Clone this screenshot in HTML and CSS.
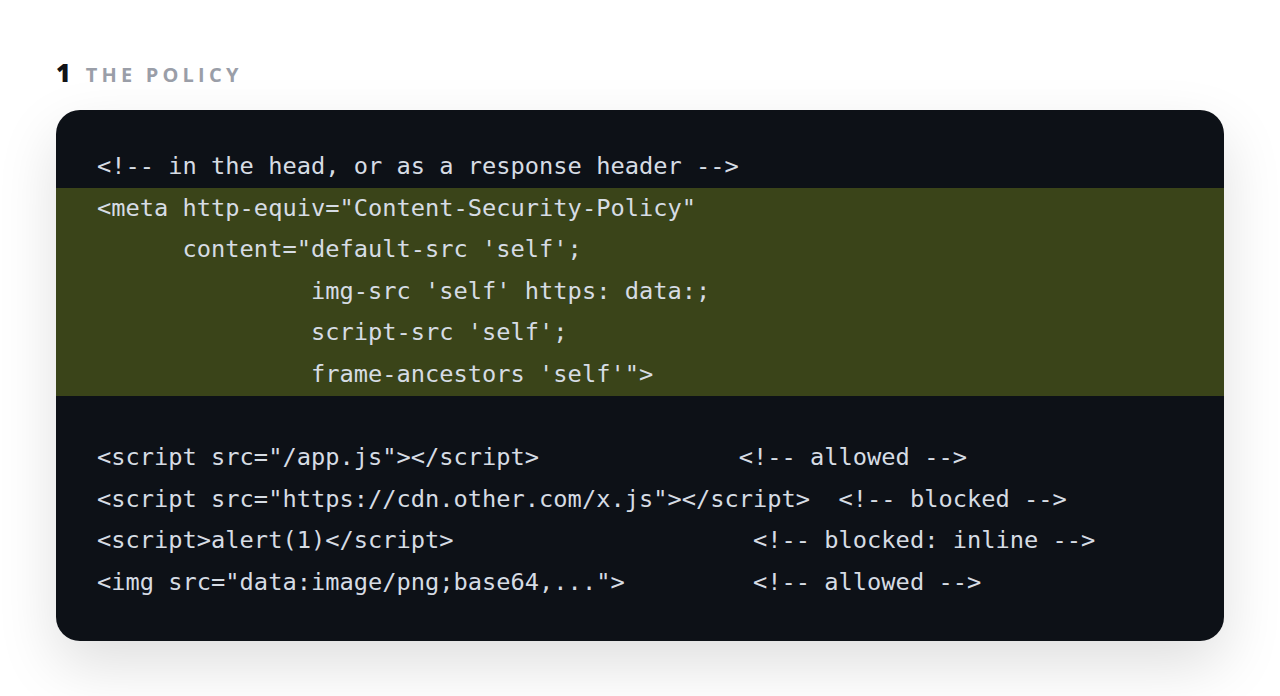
FILE: index.html
```html
<!DOCTYPE html>
<html lang="en">
<head>
<meta charset="utf-8">
<title>The policy</title>
<link rel="stylesheet" href="styles.css">
</head>
<body>
<section class="section">
  <h2 class="heading"><span class="num">1</span><span class="label">THE POLICY</span></h2>
  <div class="code">
    <div class="line">&lt;!-- in the head, or as a response header --&gt;</div>
    <div class="hl">
      <div class="line">&lt;meta http-equiv="Content-Security-Policy"</div>
      <div class="line">      content="default-src 'self';</div>
      <div class="line">               img-src 'self' https: data:;</div>
      <div class="line">               script-src 'self';</div>
      <div class="line">               frame-ancestors 'self'"&gt;</div>
    </div>
    <div class="line"> </div>
    <div class="line">&lt;script src="/app.js"&gt;&lt;/script&gt;              &lt;!-- allowed --&gt;</div>
    <div class="line">&lt;script src="https://cdn.other.com/x.js"&gt;&lt;/script&gt;  &lt;!-- blocked --&gt;</div>
    <div class="line">&lt;script&gt;alert(1)&lt;/script&gt;                     &lt;!-- blocked: inline --&gt;</div>
    <div class="line">&lt;img src="data:image/png;base64,..."&gt;         &lt;!-- allowed --&gt;</div>
  </div>
</section>
</body>
</html>
```

FILE: styles.css
```css
html, body {
  margin: 0;
  padding: 0;
  background: #ffffff;
}
body {
  font-family: "Open Sans", "Liberation Sans", sans-serif;
}
.section {
  padding: 57px 56px 56px 56px;
}
.heading {
  margin: 0 0 20px 0;
  display: flex;
  align-items: baseline;
  gap: 15px;
  line-height: 30px;
  font-weight: 700;
}
.num {
  color: #111317;
  font-size: 25px;
  font-weight: 800;
}
.label {
  color: #9a9ea8;
  font-size: 20px;
  letter-spacing: 4.2px;
}
.code {
  background: #0d1117;
  border-radius: 24px;
  padding: 36px 0 37px 0;
  box-shadow: 0 24px 60px rgba(0, 0, 0, 0.13);
  font-family: "DejaVu Sans Mono", "Liberation Mono", monospace;
  font-size: 23.7px;
  line-height: 41.6px;
  color: #d6dce4;
}
.hl {
  background: #3a4419;
}
.line {
  padding-left: 41px;
  height: 41.6px;
  white-space: pre;
}
```
